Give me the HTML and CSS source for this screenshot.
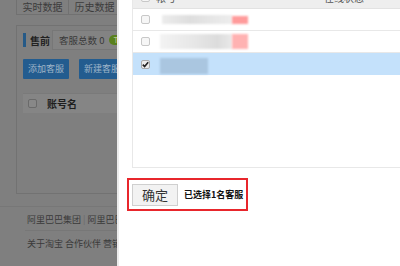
FILE: index.html
```html
<!DOCTYPE html>
<html>
<head>
<meta charset="utf-8">
<link rel="stylesheet" href="styles.css">
</head>
<body>
<div class="screen">
  <div class="page">
    <div class="tabs">
      <div class="tab">实时数据</div>
      <div class="tab">历史数据</div>
    </div>
    <div class="box">
      <div class="box-head">
        <span class="bar"></span>
        <span class="title">售前</span>
        <div class="count">客服总数 0 <span class="pill">T...</span></div>
      </div>
      <div class="btns">
        <span class="btn">添加客服</span>
        <span class="btn">新建客服</span>
      </div>
      <div class="thead">
        <span class="cb dark"></span>
        <span class="th">账号名</span>
      </div>
    </div>
    <div class="foot">
      <div class="foot-row">阿里巴巴集团 <span class="sep">|</span> 阿里巴巴国际站</div>
      <div class="foot-row second">关于淘宝 合作伙伴 营销中心</div>
    </div>
  </div>
  <div class="panel">
    <div class="tbl">
      <div class="row head">
        <span class="cb"></span>
        <span class="h1">帐号</span>
        <span class="h2">在线状态</span>
      </div>
      <div class="row">
        <span class="cb"></span>
        <span class="blur gray g1"></span>
        <span class="blur red r1"></span>
      </div>
      <div class="row">
        <span class="cb"></span>
        <span class="blur gray g2"></span>
        <span class="blur red r2"></span>
      </div>
      <div class="row sel">
        <span class="cb checked"><svg viewBox="0 0 9 9" width="9" height="9"><path d="M1.8 4.6 L3.6 6.6 L7.2 2.2" fill="none" stroke="#222" stroke-width="1.6"/></svg></span>
        <span class="blur blue b1"></span>
      </div>
    </div>
    <div class="confirm">
      <span class="ok">确定</span>
      <span class="picked">已选择1名客服</span>
    </div>
  </div>
</div>
</body>
</html>
```

FILE: styles.css
```css
* { box-sizing: border-box; }
html, body { margin: 0; padding: 0; }
body {
  width: 400px;
  height: 266px;
  overflow: hidden;
  font-family: "Noto Sans CJK SC", "DejaVu Sans", sans-serif;
}
.screen { display: flex; width: 400px; height: 266px; }

.page {
  width: 117px;
  flex: none;
  background: #7f7f7f;
  overflow: hidden;
  color: #3a3a3a;
}
.tabs {
  display: flex;
  margin-left: 16px;
  width: 140px;
  height: 15px;
  border: 1px solid #717171;
  border-top: none;
}
.tab {
  width: 52px;
  font-size: 10px;
  line-height: 14px;
  text-align: center;
  color: #3c3c3c;
  border-right: 1px solid #717171;
  flex: none;
}
.box {
  margin: 10px 0 0 16px;
  width: 140px;
  height: 169px;
  border: 1px solid #727272;
  padding: 3px 0 0 6px;
}
.box-head { display: flex; align-items: center; height: 22px; }
.bar { width: 3px; height: 14px; background: #265a87; margin-right: 4px; flex: none; }
.title { font-size: 10px; font-weight: bold; color: #222; white-space: nowrap; margin-right: 2px; flex: none; }
.count {
  display: flex; align-items: center;
  height: 20px;
  padding-left: 6px;
  border: 1px solid #777;
  background: #838383;
  font-size: 9.5px;
  color: #3a3a3a;
  white-space: nowrap;
  flex: 1;
}
.pill {
  margin-left: 5px;
  background: #5a801d;
  color: #b5c48f;
  border-radius: 5px;
  font-size: 8px;
  line-height: 10px;
  padding: 0 4px;
}
.btns { display: flex; gap: 10px; margin-top: 8px; }
.btn {
  width: 46px; height: 20px; flex: none;
  background: #235c8f;
  color: #9fb4c8;
  font-size: 9px;
  line-height: 20px;
  text-align: center;
  border-radius: 1px;
}
.thead {
  display: flex; align-items: center;
  margin-top: 14px;
  height: 20px;
  background: #858585;
  border-top: 1px solid #7a7a7a;
  padding-left: 5px;
}
.cb {
  width: 9px; height: 9px; flex: none;
  border: 1px solid #c8c8c8;
  background: #f6f6f6;
  border-radius: 2px;
  display: inline-flex;
}
.cb.dark { border-color: #6a6a6a; background: #888; }
.th { margin-left: 10px; font-size: 10px; font-weight: bold; color: #1e1e1e; }

.foot { margin-top: 12px; border-top: 1px solid #777; padding-left: 25px; }
.foot-row { font-size: 9px; color: #3a3a3a; line-height: 12px; padding: 7px 0 4px 2px; white-space: nowrap; }
.foot-row.second { border-top: 1px solid #777; padding-top: 7px; }
.sep { color: #6a6a6a; }

.panel {
  flex: 1;
  background: #fff;
  border-left: 2px solid #ececec;
  padding-left: 8px;
  overflow: hidden;
}
.tbl {
  margin: -14px 0 0 5px;
  height: 182px;
  border: 1px solid #e8e8e8;
  border-right: none;
}
.row {
  display: flex; align-items: center;
  height: 22px;
  border-bottom: 1px solid #e8e8e8;
  padding-left: 8px;
}
.row.head { background: #eeeeee; border-bottom: 1px solid #e2e2e2; font-size: 10px; color: #555; }
.h1 { margin-left: 6px; }
.h2 { margin-left: 148px; }
.row.sel { background: #c4e1fb; border-bottom: none; }
.cb.checked { background: #ececec; border-color: #aaa; }
.cb.checked svg { display: block; margin: -1px; }

.blur { display: block; filter: blur(1.2px); flex: none; }
.gray.g1 { margin-left: 12px; width: 70px; height: 9px; background: linear-gradient(90deg, #ececec, #dedede 40%, #e6e6e6 70%, #ededed); }
.red.r1 { width: 16px; height: 8px; background: #ff9b9b; }
.gray.g2 { margin-left: 10px; width: 72px; height: 15px; background: linear-gradient(90deg, #f3f3f3, #e6e6e6 50%, #dcdcdc 80%, #eaeaea); }
.red.r2 { width: 16px; height: 15px; background: #ffb2b2; }
.blue.b1 { margin-left: 10px; width: 48px; height: 16px; background: #aac6e0; margin-top: 3px; }

.confirm {
  display: flex; align-items: center;
  margin-top: 10px;
  width: 121px; height: 33px;
  border: 2px solid #e8262c;
  padding-left: 3px;
}
.ok {
  width: 46px; height: 22px;
  border: 1px solid #cfcfcf;
  background: #f2f2f2;
  font-size: 13px;
  line-height: 20px;
  text-align: center;
  color: #333;
}
.picked { margin-left: 6px; font-size: 9px; font-weight: bold; color: #111; white-space: nowrap; }
```
